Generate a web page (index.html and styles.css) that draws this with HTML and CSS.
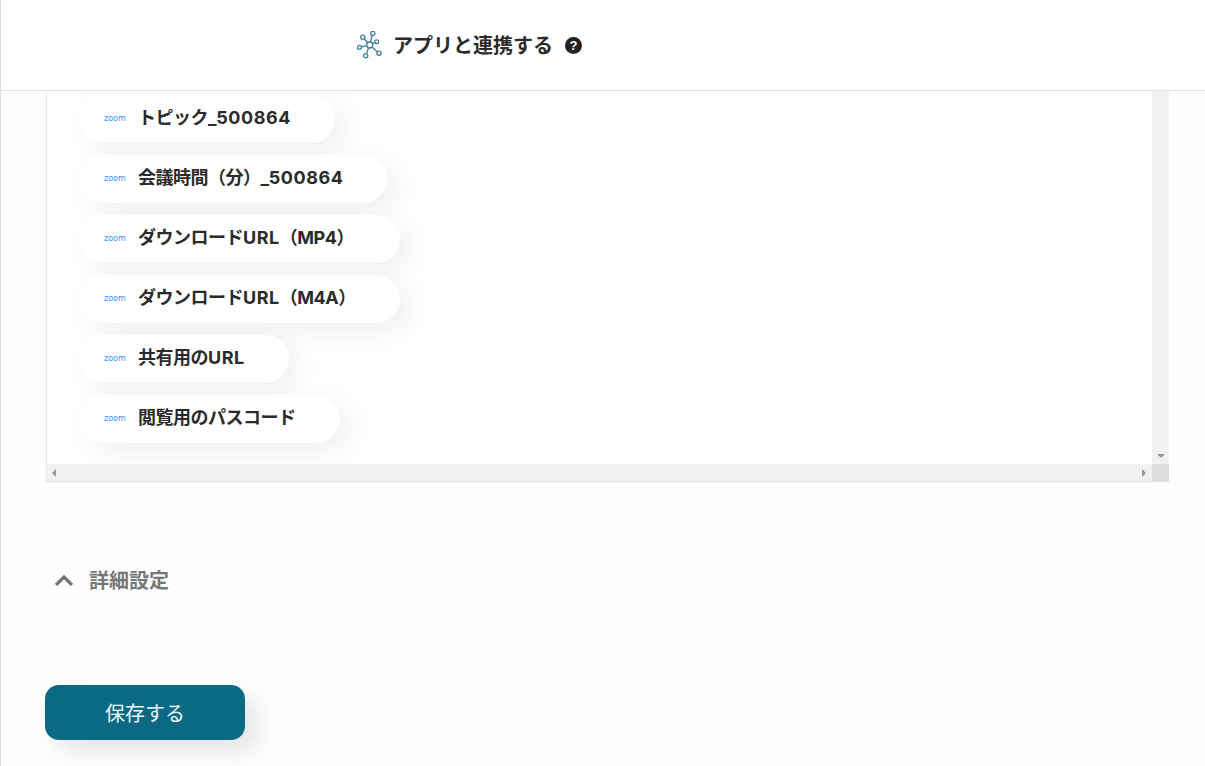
FILE: index.html
```html
<!DOCTYPE html>
<html lang="ja">
<head>
<meta charset="utf-8">
<title>アプリと連携する</title>
<link rel="stylesheet" href="styles.css">
</head>
<body>
<div class="page">
  <header class="header">
    <svg class="logo" viewBox="0 0 26 28" width="26" height="28" fill="none" stroke="#3c8299" stroke-width="1.3">
      <path d="M12.7 14 L15.7 2 M12.7 14 L5.7 6.3 M12.7 14 L19.7 10.7 M12.7 14 L2.3 16.3 M12.7 14 L22 22.3 M12.7 14 L8.7 24.7"/>
      <circle cx="12.7" cy="14" r="3" fill="#fff"/>
      <circle cx="15.8" cy="2.4" r="2.1" fill="#fff"/>
      <circle cx="5.7" cy="6.3" r="2.1" fill="#fff"/>
      <circle cx="19.7" cy="10.7" r="1.9" fill="#fff"/>
      <circle cx="2.5" cy="16.3" r="2" fill="#fff"/>
      <circle cx="22" cy="22.3" r="2.1" fill="#fff"/>
      <circle cx="8.7" cy="24.7" r="2.1" fill="#fff"/>
    </svg>
    <h1 class="title">アプリと連携する</h1>
    <span class="help">?</span>
  </header>
  <main class="main">
    <section class="box">
      <div class="list">
        <div class="pill pill-a"><span class="zoom">zoom</span><span class="label">トピック<span class="latin">_500864</span></span></div>
        <div class="pill pill-b"><span class="zoom">zoom</span><span class="label">会議時間（分）<span class="latin">_500864</span></span></div>
        <div class="pill pill-c"><span class="zoom">zoom</span><span class="label">ダウンロード<span class="latin">URL</span>（MP4）</span></div>
        <div class="pill pill-c"><span class="zoom">zoom</span><span class="label">ダウンロード<span class="latin">URL</span>（M4A）</span></div>
        <div class="pill pill-d"><span class="zoom">zoom</span><span class="label">共有用の<span class="latin">URL</span></span></div>
        <div class="pill pill-e"><span class="zoom">zoom</span><span class="label">閲覧用のパスコード</span></div>
      </div>
      <div class="vbar"><span class="arrow-down"></span></div>
      <div class="hbar"><span class="arrow-left"></span><span class="arrow-right"></span></div>
      <div class="corner"></div>
    </section>
    <div class="details">
      <svg class="chevron" viewBox="0 0 20 12" width="20" height="12" fill="none" stroke="#777" stroke-width="3.2">
        <path d="M2 11 L10 3 L18 11"/>
      </svg>
      <span class="details-label">詳細設定</span>
    </div>
    <button class="save">保存する</button>
  </main>
</div>
</body>
</html>
```
FILE: styles.css
```css
* { box-sizing: border-box; }
html, body { margin: 0; padding: 0; height: 100%; background: #fff; }
body { font-family: "Noto Sans CJK JP", "Noto Sans", sans-serif; color: #2b2b2b; overflow: hidden; }
.page { height: 766px; border-left: 1px solid #dcdcdf; display: flex; flex-direction: column; background: #fffeff; }
.header { height: 91px; flex: none; border-bottom: 1px solid #e2e1e5; background: #fff; display: flex; align-items: center; padding-left: 356px; }
.logo { flex: none; margin-right: 10px; }
.title { margin: 0; font-size: 20px; font-weight: 700; line-height: 28px; color: #2b2b2b; }
.help { width: 17px; height: 17px; margin-left: 12px; border-radius: 50%; background: #222; color: #fff; font: 700 13px/17px "Liberation Sans", sans-serif; text-align: center; flex: none; }
.main { flex: 1; padding-left: 45px; padding-right: 36px; }
.box { height: 391px; display: grid; grid-template-columns: 1fr 17px; grid-template-rows: 1fr 17px; border-left: 1px solid #e9e8ec; border-bottom: 1px solid #e2e1e5; background: #fff; }
.list { padding: 4px 0 0 32px; display: flex; flex-direction: column; gap: 12px; overflow: hidden; min-width: 0; }
.pill { height: 48px; flex: none; border-radius: 24px; background: #fff; display: flex; align-items: center; padding-left: 25px; padding-bottom: 3px; box-shadow: 10px 8px 24px rgba(110, 100, 125, 0.10); }
.pill-a { width: 256px; }
.pill-b { width: 308px; }
.pill-c { width: 321px; }
.pill-d { width: 210px; }
.pill-e { width: 261px; }
.zoom { width: 34px; flex: none; margin-top: 2px; font: 400 8px/10px "DejaVu Sans", sans-serif; color: #3f8cff; }
.label { font-family: Inter, "Noto Sans CJK JP", sans-serif; font-size: 18px; font-weight: 700; line-height: 24px; color: #2b2b2b; white-space: nowrap; letter-spacing: -0.5px; }
.latin { letter-spacing: 0.55px; }
.vbar { background: #f2f0f3; display: flex; flex-direction: column; justify-content: flex-end; align-items: center; padding-bottom: 6px; }
.hbar { background: #f2f0f3; display: flex; justify-content: space-between; align-items: center; padding: 0 6px 0 5px; }
.corner { background: #dedde0; }
.arrow-down { width: 0; height: 0; border-left: 4px solid transparent; border-right: 4px solid transparent; border-top: 4px solid #98969b; }
.arrow-left { width: 0; height: 0; border-top: 4px solid transparent; border-bottom: 4px solid transparent; border-right: 4px solid #98969b; }
.arrow-right { width: 0; height: 0; border-top: 4px solid transparent; border-bottom: 4px solid transparent; border-left: 4px solid #98969b; }
.details { display: flex; align-items: center; margin-top: 84px; padding-left: 8px; height: 28px; }
.chevron { flex: none; margin-right: 15px; }
.details-label { font-size: 20px; font-weight: 700; line-height: 28px; color: #777; }
.save { display: block; width: 200px; height: 55px; margin-top: 91px; margin-left: -1px; border: 0; border-radius: 14px; background: #0b6984; color: #eef6f8; font-family: inherit; font-size: 20px; font-weight: 400; box-shadow: 12px 12px 24px rgba(90, 85, 105, 0.16); }
```
